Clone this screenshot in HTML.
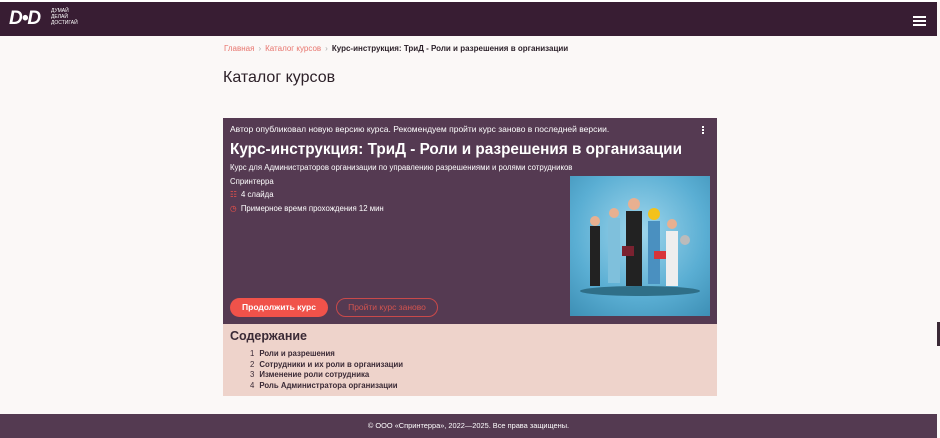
<!DOCTYPE html>
<html><head><meta charset="utf-8"><style>
*{margin:0;padding:0;box-sizing:border-box}
body{width:940px;height:438px;background:#fbf8f7;font-family:"Liberation Sans","DejaVu Sans",sans-serif;position:relative;overflow:hidden}
.hdr{position:absolute;left:0;top:2px;width:937px;height:34px;background:#381d33}
.hdr .t{position:absolute;left:0;top:-2px;width:940px;height:2px;background:#fff}
.logo{position:absolute;left:9px;top:6px;color:#fff;font-weight:bold;font-style:italic;font-size:19px;letter-spacing:-1px}
.tag{position:absolute;left:51px;top:6px;color:#fff;font-size:5px;line-height:6px}
.burger{position:absolute;left:913px;top:14px;width:13px}
.burger i{display:block;height:2px;background:#fff;margin-bottom:2px}
.bc{position:absolute;left:224px;top:44px;font-size:8px;color:#e8756e;white-space:nowrap}
.bc b{color:#2a1f28}
.bc span{color:#aaa;margin:0 4px}
h1{position:absolute;left:223px;top:69px;font-weight:normal;font-size:16px;color:#2d2129}
.card{position:absolute;left:223px;top:118px;width:494px;height:206px;background:#553a52;color:#fff}
.note{position:absolute;left:7px;top:6px;font-size:8.5px;white-space:nowrap}
.dots{position:absolute;left:479px;top:8px;width:2px;height:8px;background:repeating-linear-gradient(#fff 0 2px,transparent 2px 3px)}
.ttl{position:absolute;left:7px;top:23px;font-size:15.3px;font-weight:bold;white-space:nowrap}
.sub{position:absolute;left:7px;top:45px;font-size:7.8px;white-space:nowrap}
.auth{position:absolute;left:7px;top:59px;font-size:7.8px}
.row{position:absolute;left:7px;font-size:7.8px}
.row em{color:#f0524a;font-style:normal;margin-right:4px}
.img{position:absolute;left:347px;top:58px;width:140px;height:140px;background:radial-gradient(circle at 50% 40%,#9fd6ec,#5aaed3 60%,#3d8fb5)}
.btn1{position:absolute;left:7px;top:180px;width:98px;height:19px;border-radius:10px;background:#f0524a;font-size:8.5px;font-weight:bold;text-align:center;line-height:19px}
.btn2{position:absolute;left:113px;top:180px;width:102px;height:19px;border-radius:10px;border:1px solid #c9494a;color:#d3544f;font-size:8.5px;text-align:center;line-height:17px}
.cont{position:absolute;left:223px;top:324px;width:494px;height:72px;background:#eed3cb;color:#3a2a36}
.cont h2{position:absolute;left:7px;top:5px;font-size:12.5px}
.cont ol{position:absolute;left:27px;top:25px;list-style:none;font-size:7.8px;line-height:10.5px}
.cont li{font-weight:bold}
.cont li s{text-decoration:none;font-weight:normal;margin-right:5px}
.foot{position:absolute;left:0;top:414px;width:937px;height:24px;background:#543a51;color:#fff;font-size:7.4px;text-align:center;line-height:24px}
.sb{position:absolute;left:937px;top:322px;width:3px;height:24px;background:#3a2a36}
</style></head><body>
<div class="hdr"><div class="t"></div>
<div class="logo">D•D</div>
<div class="tag">ДУМАЙ<br>ДЕЛАЙ<br>ДОСТИГАЙ</div>
<div class="burger"><i></i><i></i><i></i></div></div>
<div class="bc">Главная<span>›</span>Каталог курсов<span>›</span><b>Курс-инструкция: ТриД - Роли и разрешения в организации</b></div>
<h1>Каталог курсов</h1>
<div class="card">
<div class="note">Автор опубликовал новую версию курса. Рекомендуем пройти курс заново в последней версии.</div>
<div class="dots"></div>
<div class="ttl">Курс-инструкция: ТриД - Роли и разрешения в организации</div>
<div class="sub">Курс для Администраторов организации по управлению разрешениями и ролями сотрудников</div>
<div class="auth">Спринтерра</div>
<div class="row" style="top:72px"><em>☷</em>4 слайда</div>
<div class="row" style="top:86px"><em>◷</em>Примерное время прохождения 12 мин</div>
<div class="img"><svg width="140" height="140"><ellipse cx="70" cy="115" rx="60" ry="5" fill="#2f6f88"/>
<rect x="20" y="50" width="10" height="60" fill="#222"/><circle cx="25" cy="45" r="5" fill="#e8b090"/>
<rect x="38" y="42" width="12" height="65" fill="#7fc0dc"/><circle cx="44" cy="37" r="5" fill="#e8b090"/>
<rect x="56" y="35" width="16" height="75" fill="#222"/><circle cx="64" cy="28" r="6" fill="#e8b090"/><rect x="52" y="70" width="12" height="10" fill="#7a2230"/>
<rect x="78" y="45" width="12" height="63" fill="#4a90c0"/><circle cx="84" cy="38" r="6" fill="#f3c21b"/><rect x="84" y="75" width="14" height="8" fill="#d9343a"/>
<rect x="96" y="55" width="12" height="55" fill="#eee"/><circle cx="102" cy="48" r="5" fill="#e8b090"/><circle cx="115" cy="64" r="5" fill="#bbb"/></svg></div>
<div class="btn1">Продолжить курс</div>
<div class="btn2">Пройти курс заново</div>
</div>
<div class="cont"><h2>Содержание</h2>
<ol><li><s>1</s>Роли и разрешения</li><li><s>2</s>Сотрудники и их роли в организации</li><li><s>3</s>Изменение роли сотрудника</li><li><s>4</s>Роль Администратора организации</li></ol></div>
<div class="foot">© ООО «Спринтерра», 2022—2025. Все права защищены.</div>
<div class="sb"></div>
</body></html>
